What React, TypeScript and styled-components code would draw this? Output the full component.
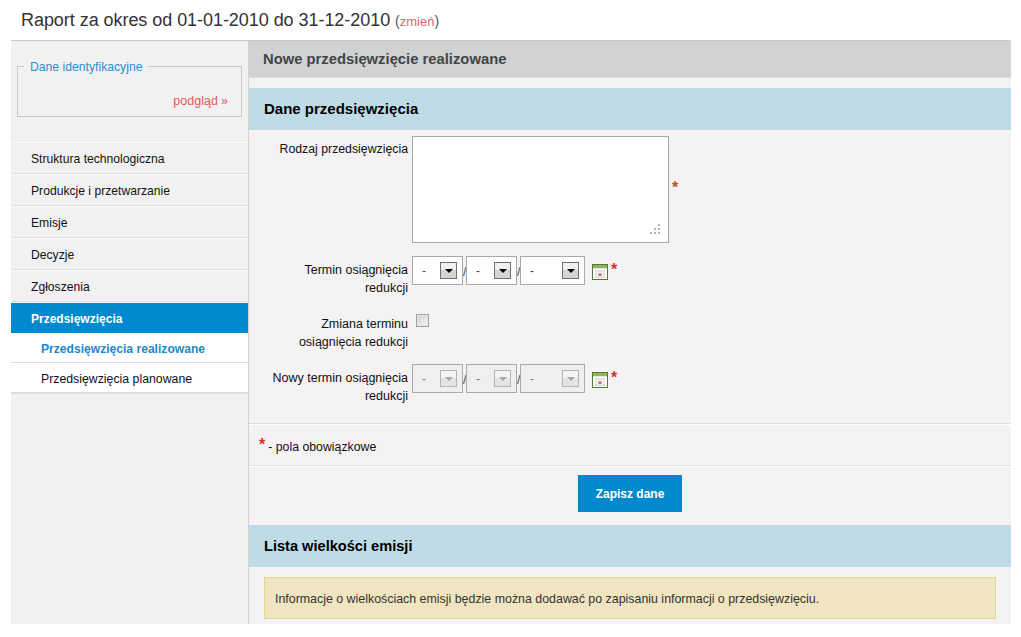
import React from 'react';
import styled, { createGlobalStyle, css } from 'styled-components';

const Global = createGlobalStyle`
	html, body { margin: 0; padding: 0; background: #fff; }
	body { font-family: "Liberation Sans", Arial, sans-serif; font-size: 12px; color: #111; }
`;

const Page = styled.div`
	width: 1000px;
	margin-left: 11px;
`;

const Title = styled.h1`
	margin: 0 0 0 10px;
	height: 40px;
	line-height: 41px;
	font-size: 18px;
	letter-spacing: -0.05px;
	font-weight: normal;
	color: #333;
	white-space: nowrap;
`;

const Change = styled.span`
	font-size: 14px;
	letter-spacing: 0;
	color: #555;
	a { color: #e0666a; font-size: 13px; }
`;

const Columns = styled.div`
	display: flex;
	height: 583px;
	border-top: 1px solid #c9c9c9;
`;

const Sidebar = styled.aside`
	width: 237px;
	flex: none;
	background: #f1f1f1;
	border-right: 1px solid #d2d2d2;
`;

const IdBox = styled.fieldset`
	margin: 17px 6px 0 6px;
	padding: 0 13px 0 6px;
	height: 59px;
	box-sizing: border-box;
	border: 1px solid #c9c9c9;
	display: flex;
	flex-direction: column;
	align-items: flex-end;
	legend {
		padding: 2px 6px 0;
		color: #2a8fd0;
		font-size: 12.2px;
		line-height: 14px;
	}
`;

const Preview = styled.a`
	display: block;
	margin-top: 20px;
	color: #e8585c;
	font-size: 12.5px;
	line-height: 14px;
	small { font-size: 12px; }
`;

const Menu = styled.nav`
	margin-top: 25px;
`;

const MenuItem = styled.a<{ $active?: boolean }>`
	display: block;
	height: 29px;
	padding: 1px 0 0 20px;
	line-height: 31px;
	border-top: 1px solid #fafafa;
	border-bottom: 1px solid #dedede;
	font-size: 12.15px;
	color: #111;
	${(p) => p.$active && css`
		background: #0089cc;
		border-bottom: 0;
		color: #fff;
		font-weight: bold;
		font-size: 12px;
	`}
`;

const SubItem = styled.a<{ $active?: boolean; $last?: boolean }>`
	display: block;
	height: 28px;
	padding: 1px 0 0 30px;
	line-height: 30px;
	background: #fff;
	border-bottom: ${(p) => (p.$last ? '2px' : '1px')} solid #dedede;
	font-size: 12.3px;
	color: #111;
	${(p) => p.$active && css`
		color: #1e88c9;
		font-weight: bold;
		font-size: 12.1px;
	`}
`;

const Main = styled.main`
	flex: 1;
	background: #f4f2f3;
`;

const Heading = styled.div`
	height: 36px;
	line-height: 36px;
	padding-left: 14px;
	background: #d1d2d4;
	border-bottom: 1px solid #dcdcdc;
	font-size: 14.8px;
	font-weight: bold;
	color: #444;
`;

const SectionBar = styled.h2<{ $top: number; $size: number }>`
	margin: ${(p) => p.$top}px 0 0;
	height: 42px;
	line-height: 42px;
	padding-left: 15px;
	background: #bfdbe6;
	font-size: ${(p) => p.$size}px;
	font-weight: bold;
	color: #000;
`;

const Form = styled.div`
	padding-top: 6px;
	height: 294px;
	box-sizing: border-box;
	border-bottom: 1px solid #dedede;
`;

const Row = styled.div<{ $height: number }>`
	display: flex;
	height: ${(p) => p.$height}px;
`;

const Label = styled.label<{ $pad: number; $size?: number }>`
	width: 159px;
	flex: none;
	box-sizing: border-box;
	padding: ${(p) => p.$pad}px 0 0 19px;
	text-align: right;
	font-size: ${(p) => p.$size ?? 12.5}px;
	line-height: 18px;
	color: #111;
`;

const Fields = styled.div`
	margin-left: 4px;
	display: flex;
	align-items: flex-start;
`;

const AreaWrap = styled.div`
	position: relative;
	line-height: 0;
`;

const Area = styled.textarea`
	width: 251px;
	height: 101px;
	padding: 2px;
	margin: 0;
	border: 1px solid #a9a9a9;
	background: #fff;
	display: block;
	resize: none;
`;

const Grip = styled.svg`
	position: absolute;
	right: 8px;
	bottom: 8px;
`;

const Star = styled.span<{ $top: number; $orange?: boolean }>`
	color: ${(p) => (p.$orange ? '#c8501e' : '#d8302a')};
	font-size: 16px;
	font-weight: bold;
	line-height: 16px;
	margin-top: ${(p) => p.$top}px;
	margin-left: 3px;
`;

const SelectBox = styled.div<{ $width: number; $off?: boolean }>`
	width: ${(p) => p.$width}px;
	height: 29px;
	box-sizing: border-box;
	border: 1px solid #a9a9a9;
	background: ${(p) => (p.$off ? '#efefef' : '#fff')};
	display: flex;
	align-items: center;
	justify-content: space-between;
	padding: 0 5px 0 9px;
	font-size: 12px;
	color: ${(p) => (p.$off ? '#777' : '#444')};
`;

const Arrow = styled.span<{ $off?: boolean }>`
	width: 17px;
	height: 17px;
	box-sizing: border-box;
	border: 1px solid ${(p) => (p.$off ? '#b4b4b4' : '#707070')};
	background: ${(p) => (p.$off ? 'linear-gradient(#f4f4f4 50%, #e4e4e4 50%)' : 'linear-gradient(#f0f0f0 50%, #d4d4d4 50%)')};
	display: flex;
	align-items: center;
	justify-content: center;
	&::after {
		content: '';
		border-top: 4px solid ${(p) => (p.$off ? '#a8a8a8' : '#000')};
		border-left: 4px solid transparent;
		border-right: 4px solid transparent;
		margin-top: 1px;
	}
`;

const Slash = styled.span`
	width: 3px;
	text-align: center;
	margin-top: 9px;
	font-size: 12px;
	line-height: 14px;
	color: #444;
`;

const CalendarWrap = styled.span`
	margin: 8px 0 0 7px;
	display: block;
	height: 16px;
`;

const Check = styled.span`
	display: block;
	width: 13px;
	height: 13px;
	box-sizing: border-box;
	margin-top: 3px;
	margin-left: 4px;
	border: 1px solid #a2a2a2;
	background: linear-gradient(135deg, #cfd0d6, #f7f7f9);
	box-shadow: inset 0 0 0 1px #e8e8ea;
`;

const Note = styled.div`
	height: 40px;
	padding-left: 10px;
	display: flex;
	align-items: center;
	border-top: 1px solid #fff;
	border-bottom: 1px solid #dedede;
	font-size: 12.3px;
	color: #111;
`;

const NoteStar = styled.span`
	color: #d8302a;
	font-size: 16px;
	font-weight: bold;
	line-height: 16px;
	margin-right: 3px;
`;

const NoteText = styled.span`
	margin-top: 4px;
`;

const Actions = styled.div`
	border-top: 1px solid #fff;
	display: flex;
	justify-content: center;
	padding-top: 8px;
`;

const Save = styled.button`
	width: 104px;
	height: 37px;
	border: 0;
	background: #0089cc;
	color: #fff;
	font: bold 12px "Liberation Sans", Arial, sans-serif;
`;

const Notice = styled.div`
	margin: 10px 15px 0;
	height: 42px;
	box-sizing: border-box;
	line-height: 42px;
	padding-left: 10px;
	background: #efe5c1;
	border: 1px solid #e2da8c;
	font-size: 12.4px;
	color: #333;
`;

const Calendar = () => (
	<svg width="16" height="16" viewBox="0 0 16 16">
		<rect x="0.5" y="0.5" width="15" height="15" fill="#fdfdfd" stroke="#55782e" />
		<rect x="1" y="1" width="14" height="3" fill="#8fb365" />
		<rect x="1" y="4" width="14" height="1" fill="#dfe8d2" />
		<rect x="3" y="6" width="10" height="8" fill="#dadada" />
		<path d="M5.5 6v8M8 6v8M10.5 6v8M3 8.5h10M3 11h10" stroke="#f6f6f6" />
		<rect x="6.5" y="9.5" width="3" height="2.5" fill="#d0705a" />
	</svg>
);

const DateField: React.FC<{ off?: boolean }> = ({ off }) => (
	<Fields>
		<SelectBox $width={51} $off={off}>-<Arrow $off={off} /></SelectBox>
		<Slash>/</Slash>
		<SelectBox $width={51} $off={off}>-<Arrow $off={off} /></SelectBox>
		<Slash>/</Slash>
		<SelectBox $width={65} $off={off}>-<Arrow $off={off} /></SelectBox>
		<CalendarWrap><Calendar /></CalendarWrap>
		<Star $top={6}>*</Star>
	</Fields>
);

export default function App() {
	return (
		<Page>
			<Global />
			<Title>Raport za okres od 01-01-2010 do 31-12-2010 <Change>(<a>zmień</a>)</Change></Title>
			<Columns>
				<Sidebar>
					<IdBox>
						<legend>Dane identyfikacyjne</legend>
						<Preview>podgląd <small>»</small></Preview>
					</IdBox>
					<Menu>
						<MenuItem>Struktura technologiczna</MenuItem>
						<MenuItem>Produkcje i przetwarzanie</MenuItem>
						<MenuItem>Emisje</MenuItem>
						<MenuItem>Decyzje</MenuItem>
						<MenuItem>Zgłoszenia</MenuItem>
						<MenuItem $active>Przedsięwzięcia</MenuItem>
						<SubItem $active>Przedsięwzięcia realizowane</SubItem>
						<SubItem $last>Przedsięwzięcia planowane</SubItem>
					</Menu>
				</Sidebar>
				<Main>
					<Heading>Nowe przedsięwzięcie realizowane</Heading>
					<SectionBar $top={10} $size={15}>Dane przedsięwzięcia</SectionBar>
					<Form>
						<Row $height={120}>
							<Label $pad={4} $size={12.3}>Rodzaj przedsięwzięcia</Label>
							<Fields>
								<AreaWrap>
									<Area />
									<Grip width="11" height="11" viewBox="0 0 11 11" fill="#b4b4b4">
										<rect x="8" y="0" width="2" height="2" />
										<rect x="4" y="4" width="2" height="2" />
										<rect x="8" y="4" width="2" height="2" />
										<rect x="0" y="8" width="2" height="2" />
										<rect x="4" y="8" width="2" height="2" />
										<rect x="8" y="8" width="2" height="2" />
									</Grip>
								</AreaWrap>
								<Star $top={44} $orange>*</Star>
							</Fields>
						</Row>
						<Row $height={55}>
							<Label $pad={5}>Termin osiągnięcia redukcji</Label>
							<DateField />
						</Row>
						<Row $height={53}>
							<Label $pad={4}>Zmiana terminu osiągnięcia redukcji</Label>
							<Fields><Check /></Fields>
						</Row>
						<Row $height={54}>
							<Label $pad={5}>Nowy termin osiągnięcia redukcji</Label>
							<DateField off />
						</Row>
					</Form>
					<Note><NoteStar>*</NoteStar><NoteText>- pola obowiązkowe</NoteText></Note>
					<Actions><Save>Zapisz dane</Save></Actions>
					<SectionBar $top={13} $size={14.6}>Lista wielkości emisji</SectionBar>
					<Notice>Informacje o wielkościach emisji będzie można dodawać po zapisaniu informacji o przedsięwzięciu.</Notice>
				</Main>
			</Columns>
		</Page>
	);
}
